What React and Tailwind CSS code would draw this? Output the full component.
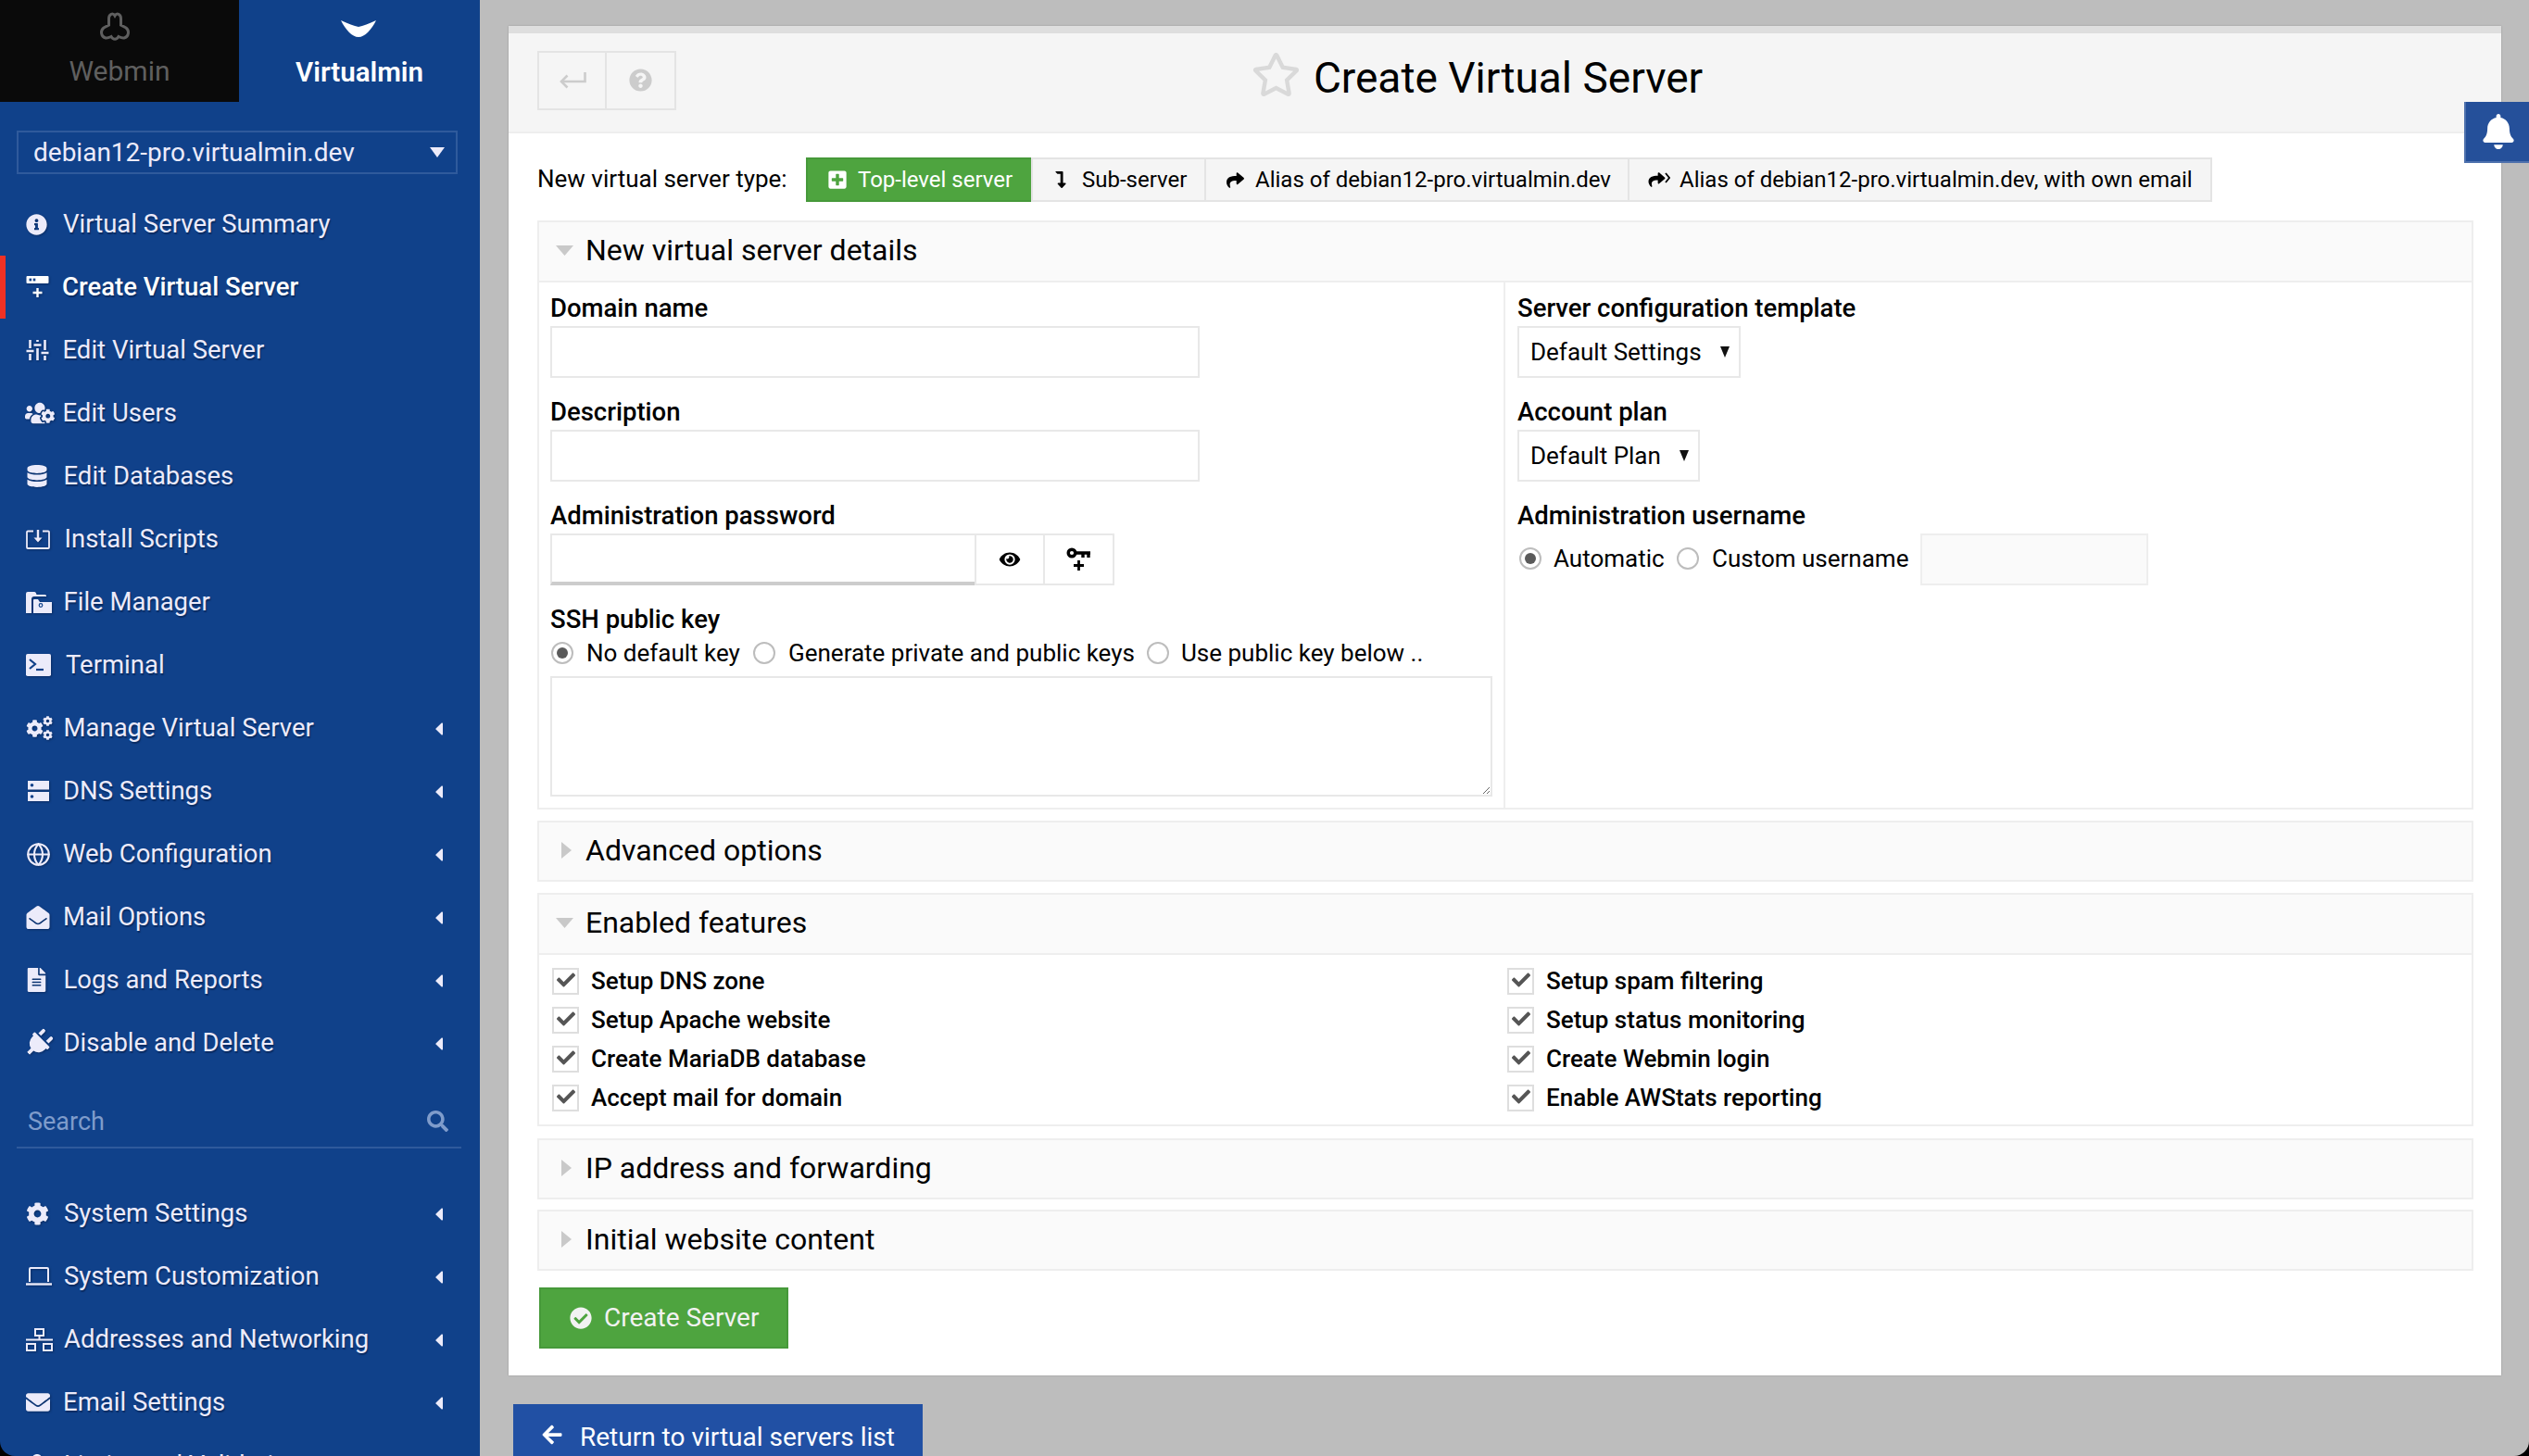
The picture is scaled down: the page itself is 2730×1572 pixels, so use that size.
import React from 'react';
import { FaInfoCircle, FaUsersCog, FaDatabase, FaCog, FaEnvelopeOpen, FaFileAlt, FaPlug, FaEnvelope, FaPlusSquare, FaShare, FaLevelDownAlt, FaQuestionCircle, FaRegStar, FaBell, FaEye, FaCheck, FaCheckCircle, FaArrowLeft, FaSearch, FaUser } from 'react-icons/fa';
import { Globe } from 'lucide-react';

const CreateIco = () => (
  <svg viewBox="0 0 24 24" className="w-[25px] h-[24px]" fill="currentColor">
    <path d="M1 0h22a1 1 0 0 1 1 1v6a1 1 0 0 1-1 1H1a1 1 0 0 1-1-1V1a1 1 0 0 1 1-1z" />
    <rect x="3" y="2.6" width="2.6" height="2.8" fill="#10418a" />
    <rect x="7.2" y="2.6" width="2.6" height="2.8" fill="#10418a" />
    <path d="M12 13v10M7 18h10" stroke="currentColor" strokeWidth="2.4" fill="none" />
  </svg>
);
const SlidersIco = () => (
  <svg viewBox="0 0 24 22" className="w-[25px] h-[22px]" stroke="currentColor" strokeWidth="2.6" fill="none">
    <path d="M4 0v9M0 12h8M4 15v7M12 0v2M8 5.500h8M12 9v13M20 0v11M16 14h8M20 17v5" />
  </svg>
);
const InstallIco = () => (
  <svg viewBox="0 0 26 21" className="w-[26px] h-[21px]" stroke="currentColor" strokeWidth="1.800" fill="none">
    <path d="M8 1.500H2a1 1 0 0 0-1 1V19a1 1 0 0 0 1 1h22a1 1 0 0 0 1-1V2.500a1 1 0 0 0-1-1h-6" />
    <path d="M13 0v10" strokeWidth="2.400" />
    <path d="M8.500 8.500h9L13 13.500z" fill="currentColor" stroke="none" />
  </svg>
);
const FilesIco = () => (
  <svg viewBox="0 0 28 23" className="w-[28px] h-[23px]" fill="currentColor">
    <path d="M0 23V2a2 2 0 0 1 2-2h7a2 2 0 0 1 2 1.500l.500 1.500H20a2 2 0 0 1 2 1v1H9a3 3 0 0 0-3 3v15z" />
    <path d="M8 23V9a1 1 0 0 1 1-1h4l2 3h13v12z" />
    <circle cx="16" cy="14.500" r="1.800" fill="none" stroke="#10418a" strokeWidth="1.200" />
  </svg>
);
const TerminalIco = () => (
  <svg viewBox="0 0 27 24" className="w-[27px] h-[24px]">
    <rect width="27" height="24" rx="1.800" fill="currentColor" />
    <path d="M4 6l6 5-6 5" stroke="#10418a" strokeWidth="2.200" fill="none" />
    <path d="M11 17h8" stroke="#10418a" strokeWidth="2.200" />
  </svg>
);
const CogsIco = () => (
  <span className="relative block w-[29px] h-[26px]">
    <FaCog className="absolute left-0 top-[4px] w-[19px] h-[19px]" />
    <FaCog className="absolute right-0 top-0 w-[11px] h-[11px]" />
    <FaCog className="absolute right-0 bottom-0 w-[11px] h-[11px]" />
  </span>
);
const DnsIco = () => (
  <svg viewBox="0 0 23 22" className="w-[23px] h-[22px]">
    <rect width="23" height="9.500" fill="currentColor" />
    <rect y="12" width="23" height="10" fill="currentColor" />
    <circle cx="4.500" cy="4.750" r="1.800" fill="#10418a" />
    <circle cx="4.500" cy="17" r="1.800" fill="#10418a" />
  </svg>
);
const LaptopIco = () => (
  <svg viewBox="0 0 28 20" className="w-[28px] h-[20px]" fill="none" stroke="currentColor" strokeWidth="2">
    <path d="M4 16V2a1 1 0 0 1 1-1h18a1 1 0 0 1 1 1v14" />
    <path d="M0 18.500h28" strokeWidth="2.400" />
  </svg>
);
const NetIco = () => (
  <svg viewBox="0 0 29 25" className="w-[29px] h-[25px]" fill="none" stroke="currentColor" strokeWidth="2">
    <rect x="10" y="1" width="9" height="7" />
    <rect x="1" y="17" width="9" height="7" />
    <rect x="19" y="17" width="9" height="7" />
    <path d="M14.500 8v4.500M0 12.500h29" />
  </svg>
);
const BackIco = () => (
  <svg viewBox="0 0 30 18" className="w-[30px] h-[18px]" fill="none" stroke="currentColor" strokeWidth="2.600">
    <path d="M28.500 0v10H3" />
    <path d="M9.500 3.500L3 10l6.500 6.500" />
  </svg>
);

const Tri = () => (
  <svg viewBox="0 0 9 14" className="w-[9px] h-[14px] absolute right-[39px] top-1/2 -translate-y-1/2 mt-[1px]" fill="currentColor">
    <path d="M8 1.200V12.800a.8.8 0 0 1-1.300.6L.8 7.800a1 1 0 0 1 0-1.600L6.700.600A.8.8 0 0 1 8 1.200z" />
  </svg>
);

const Item = ({ icon, tw, label, sub, active }) => (
  <div className={`relative flex items-center h-[68px] text-[27.5px] text-[#ecebfa] [text-shadow:1px_2px_1px_#0a2c63] ${active ? 'font-medium text-white' : ''}`}>
    {active && <span className="absolute left-0 top-0 bottom-0 w-[6px] bg-[#ef3124]" />}
    <span className={`flex items-center shrink-0 pl-[28px] drop-shadow-[1px_1px_1px_#0a2c63] ${tw}`}>{icon}</span>
    <span className="whitespace-nowrap">{label}</span>
    {sub && <Tri />}
  </div>
);

const Sidebar = () => (
  <aside className="w-[518px] shrink-0 h-full bg-[#10418a] overflow-hidden font-['Roboto',sans-serif]">
    <div className="flex h-[110px]">
      <div className="w-[258px] bg-[#0a0a0a] flex flex-col items-center pt-[13px] text-[#5f5f5f]">
        <svg viewBox="0 0 34 32" className="w-[34px] h-[32px] -ml-[10px]" fill="none" stroke="#5f5f5f" strokeWidth="3">
          <path d="M10.500 14V7C10.500 2 15 .500 17 4C19 .500 23.500 2 23.500 7V14L29 17C33 20 32 27 27 28C25 28.500 23 27.500 21 26.500C19 30 15 30 13 26.500C11 27.500 9 28.500 7 28C2 27 1 20 5 17Z" />
        </svg>
        <span className="text-[30px] leading-[36px] mt-[14px] font-normal">Webmin</span>
      </div>
      <div className="flex-1 flex flex-col items-center pt-[22px] text-white">
        <svg viewBox="0 0 38 18" className="w-[38px] h-[18px] -ml-[3px]" fill="#fff">
          <path d="M0 0C8 3.500 14 6 19 7C24 6 30 3.500 38 0C33 10 26 18 19 18C12 18 5 10 0 0Z" />
        </svg>
        <span className="text-[29.5px] leading-[36px] mt-[20px] font-semibold">Virtualmin</span>
      </div>
    </div>
    <div className="mt-[31px] ml-[18px] w-[476px] h-[47px] border-2 border-[#2f5a9c] flex items-center justify-between pl-[16px] pr-[12px] text-[#ecebfa] text-[28px]">
      <span>debian12-pro.virtualmin.dev</span>
      <svg viewBox="0 0 16 11" className="w-[16px] h-[11px]" fill="currentColor"><path d="M0 0h16L8 11z" /></svg>
    </div>
    <div className="mt-[20px]">
      <Item tw="w-[68px]" icon={<FaInfoCircle className="w-[23px] h-[23px]" />} label="Virtual Server Summary" />
      <Item tw="w-[67px]" active icon={<CreateIco />} label="Create Virtual Server" />
      <Item tw="w-[67.5px]" icon={<SlidersIco />} label="Edit Virtual Server" />
      <Item tw="w-[67.5px]" icon={<FaUsersCog className="w-[32px] h-[26px] -ml-[1px]" />} label="Edit Users" />
      <Item tw="w-[68.5px]" icon={<FaDatabase className="w-[24px] h-[24px]" />} label="Edit Databases" />
      <Item tw="w-[69.5px]" icon={<InstallIco />} label="Install Scripts" />
      <Item tw="w-[68.5px]" icon={<FilesIco />} label="File Manager" />
      <Item tw="w-[71px]" icon={<TerminalIco />} label="Terminal" />
      <Item tw="w-[68.5px]" sub icon={<CogsIco />} label="Manage Virtual Server" />
      <Item tw="w-[68px]" sub icon={<span className="pl-[2px]"><DnsIco /></span>} label="DNS Settings" />
      <Item tw="w-[68px]" sub icon={<Globe className="w-[27px] h-[27px]" strokeWidth={1.9} />} label="Web Configuration" />
      <Item tw="w-[68px]" sub icon={<FaEnvelopeOpen className="w-[26px] h-[25px]" />} label="Mail Options" />
      <Item tw="w-[68.5px]" sub icon={<FaFileAlt className="w-[23px] h-[26px]" />} label="Logs and Reports" />
      <Item tw="w-[68.5px]" sub icon={<FaPlug className="w-[31px] h-[31px] rotate-45 -ml-[2px]" />} label="Disable and Delete" />
    </div>
    <div className="mt-[24px] ml-[18px] w-[480px] h-[56px] border-b-2 border-[#2f5a9c] flex items-center justify-between pl-[12px] pr-[14px] text-[#7f9ccb] text-[27px]">
      <span>Search</span>
      <FaSearch className="w-[23px] h-[23px] -mt-[2px]" />
    </div>
    <div className="mt-[36px]">
      <Item tw="w-[69px]" sub icon={<FaCog className="w-[25px] h-[25px]" />} label="System Settings" />
      <Item tw="w-[69px]" sub icon={<LaptopIco />} label="System Customization" />
      <Item tw="w-[69px]" sub icon={<NetIco />} label="Addresses and Networking" />
      <Item tw="w-[68px]" sub icon={<FaEnvelope className="w-[26px] h-[26px]" />} label="Email Settings" />
      <Item tw="w-[69px]" sub icon={<FaUser className="w-[24px] h-[24px]" />} label="Limits and Validation" />
    </div>
  </aside>
);

const Down = () => <svg viewBox="0 0 19 11" className="w-[19px] h-[11px] absolute left-[18px] top-[25px]" fill="#c9c9c9"><path d="M0 0h19L9.500 11z" /></svg>;
const Right = () => <svg viewBox="0 0 11 18" className="w-[11px] h-[18px] absolute left-[24px] top-[21px]" fill="#c9c9c9"><path d="M0 0l11 9L0 18z" /></svg>;

const SecHead = ({ title, open }) => (
  <div className={`relative bg-[#fafafa] flex items-center pl-[50px] text-[32px] text-black ${open ? 'border-b-2 border-[#eeeeee] h-[65px]' : 'h-[62px]'}`}>
    {open ? <Down /> : <Right />}
    <span className="-mt-[3px]">{title}</span>
  </div>
);
const Collapsed = ({ title, cls }) => (
  <section className={`border-2 border-[#eeeeee] h-[66px] ${cls}`}>
    <SecHead title={title} />
  </section>
);

const Field = ({ label, children, cls }) => (
  <div className={cls}>
    <div className="h-[34px] flex items-center text-[27.5px] font-medium text-black -translate-y-[2px]">{label}</div>
    {children}
  </div>
);
const Radio = ({ on }) => (
  <span className="w-[24px] h-[24px] rounded-full border-2 border-[#bdbdbd] bg-white flex items-center justify-center shrink-0">
    {on && <span className="w-[12px] h-[12px] rounded-full bg-[#5a5a5a]" />}
  </span>
);
const TextIn = ({ cls }) => <input type="text" className={`block h-[56px] border-2 border-[#e8e8e8] bg-white outline-none ${cls}`} />;
const Sel = ({ text, cls }) => (
  <div className={`h-[56px] border-2 border-[#e8e8e8] flex items-center justify-between pl-[12px] pr-[10px] text-[26px] text-black ${cls}`}>
    <span>{text}</span>
    <svg viewBox="0 0 10 12" className="w-[10px] h-[12px]" fill="#111"><path d="M0 0h10L5 12z" /></svg>
  </div>
);
const Check = ({ label }) => (
  <div className="h-[42px] flex items-center text-[26px] font-medium text-black">
    <span className="relative w-[29px] h-[29px] border-2 border-[#dedede] bg-white shrink-0">
      <FaCheck className="absolute left-[3px] top-[1px] w-[20px] h-[20px] text-[#555555]" />
    </span>
    <span className="ml-[13px]">{label}</span>
  </div>
);
const TypeTab = ({ w, children, on }) => (
  <div className={`h-[48px] flex items-center border-2 -ml-[2px] whitespace-nowrap ${on ? 'bg-[#4ea43f] border-[#46993a] text-white' : 'bg-[#f5f5f5] border-[#e4e4e4] text-black'} ${w}`}>
    {children}
  </div>
);

const Panel = () => (
  <div className="w-[2151px] h-[1457px] bg-white shadow-[0_0_2px_#999] font-['Roboto',sans-serif]">
    <header className="h-[116px] border-t-[8px] border-b-2 border-t-[#dedede] border-b-[#eeeeee] bg-[#f5f5f5] grid grid-cols-[1fr_auto_1fr] pl-[31px] pr-[31px]">
      <div className="flex items-start pt-[19px] justify-between">
        <div className="flex h-[64px] border-2 border-[#e4e4e4] text-[#cccccc]">
          <span className="w-[73px] flex items-center justify-center border-r-2 border-[#e4e4e4]"><BackIco /></span>
          <span className="w-[73px] flex items-center justify-center"><FaQuestionCircle className="w-[25px] h-[25px] -mt-[1px]" /></span>
        </div>
        <FaRegStar className="w-[53px] h-[51px] mr-[7px] text-[#d9d9d9]" />
      </div>
      <h1 className="text-[46px] font-normal text-black self-center ml-[7px] -mt-[9px] whitespace-nowrap">Create Virtual Server</h1>
      <div />
    </header>
    <div className="pl-[31px] pr-[30px] pt-[26px]">
      <div className="flex items-center h-[48px] text-[24px] text-black">
        <span className="w-[292px] -mt-[2px] text-[26px]">New virtual server type:</span>
        <TypeTab w="w-[245px] pl-[22px]" on><FaPlusSquare className="w-[20px] h-[22px]" /><span className="ml-[12px]">Top-level server</span></TypeTab>
        <TypeTab w="w-[189px] pl-[24px]"><FaLevelDownAlt className="w-[12px] h-[18px]" /><span className="ml-[17px]">Sub-server</span></TypeTab>
        <TypeTab w="w-[459px] pl-[20px]"><FaShare className="w-[23px] h-[19px]" /><span className="ml-[10px]">Alias of debian12-pro.virtualmin.dev</span></TypeTab>
        <TypeTab w="w-[631px] pl-[20px]">
          <span className="relative w-[24px] h-[18px]"><FaShare className="absolute left-0 top-0 w-[19px] h-[18px]" /><svg viewBox="0 0 6 12" className="absolute right-0 top-[1px] w-[6px] h-[12px]" fill="none" stroke="currentColor" strokeWidth="1.800"><path d="M1 1l4 5-4 5" /></svg></span>
          <span className="ml-[10px]">Alias of debian12-pro.virtualmin.dev, with own email</span>
        </TypeTab>
      </div>

      <section className="mt-[20px] border-2 border-[#eeeeee] h-[636px] flex flex-col">
        <SecHead title="New virtual server details" open />
        <div className="flex flex-1">
          <div className="w-[1041px] shrink-0 pl-[12px] pt-[13px]">
            <Field label="Domain name"><TextIn cls="w-[701px]" /></Field>
            <Field label="Description" cls="mt-[22px]"><TextIn cls="w-[701px]" /></Field>
            <Field label="Administration password" cls="mt-[22px]">
              <div className="flex h-[56px]">
                <input type="text" className="block w-[460px] h-[56px] border-2 border-[#e8e8e8] border-b-[4px] border-b-[#cccccc] outline-none" />
                <span className="w-[76px] -ml-[2px] border-2 border-[#e8e8e8] flex items-center justify-center"><FaEye className="w-[24px] h-[20px] text-black" /></span>
                <span className="w-[77px] -ml-[2px] border-2 border-[#e8e8e8] flex items-center justify-center">
                  <svg viewBox="0 0 27 26" className="w-[27px] h-[26px]" fill="none" stroke="#000" strokeWidth="3.4"><circle cx="6" cy="6" r="3.800" /><path d="M10 6h16M18 6v5M24 6v5" /><path d="M13.500 14v11M8 19.500h11" strokeWidth="2.800" /></svg>
                </span>
              </div>
            </Field>
            <Field label="SSH public key" cls="mt-[22px]">
              <div className="h-[34px] flex items-center text-[26px] text-black pl-[1px]">
                <Radio on /><span className="ml-[14px] w-[180px]">No default key</span>
                <Radio /><span className="ml-[14px] w-[387px]">Generate private and public keys</span>
                <Radio /><span className="ml-[13px]">Use public key below ..</span>
              </div>
              <textarea className="block mt-[8px] w-[1017px] h-[130px] border-2 border-[#e8e8e8] outline-none" />
            </Field>
          </div>
          <div className="flex-1 border-l-2 border-[#eeeeee] pl-[13px] pt-[13px]">
            <Field label="Server configuration template"><Sel text="Default Settings" cls="w-[241px]" /></Field>
            <Field label="Account plan" cls="mt-[22px]"><Sel text="Default Plan" cls="w-[197px]" /></Field>
            <Field label="Administration username" cls="mt-[22px]">
              <div className="flex items-center h-[56px] text-[26px] text-black pl-[2px]">
                <div className="flex items-center -mt-[2px]">
                  <Radio on /><span className="ml-[13px] w-[133px]">Automatic</span>
                  <Radio /><span className="ml-[14px] w-[225px]">Custom username</span>
                </div>
                <span className="w-[246px] h-[56px] border-2 border-[#eeeeee] bg-[#fafafa]" />
              </div>
            </Field>
          </div>
        </div>
      </section>

      <Collapsed title="Advanced options" cls="mt-[12px]" />

      <section className="mt-[12px] border-2 border-[#eeeeee] h-[252px]">
        <SecHead title="Enabled features" open />
        <div className="flex pt-[7px] pl-[14px]">
          <div className="w-[1031px]">
            {['Setup DNS zone', 'Setup Apache website', 'Create MariaDB database', 'Accept mail for domain'].map(t => <Check key={t} label={t} />)}
          </div>
          <div>
            {['Setup spam filtering', 'Setup status monitoring', 'Create Webmin login', 'Enable AWStats reporting'].map(t => <Check key={t} label={t} />)}
          </div>
        </div>
      </section>

      <Collapsed title="IP address and forwarding" cls="mt-[13px]" />
      <Collapsed title="Initial website content" cls="mt-[11px]" />

      <button className="mt-[18px] ml-[2px] w-[269px] h-[66px] bg-[#4ea43f] border-2 border-[#46993a] text-[#f2f2f2] text-[28px] flex items-center pl-[31px]">
        <FaCheckCircle className="w-[24px] h-[24px]" />
        <span className="ml-[13px]">Create Server</span>
      </button>
    </div>
  </div>
);

export default function App() {
  return (
    <div className="relative flex w-[2730px] h-[1572px] bg-black">
      <div className="flex w-full h-full rounded-b-[16px] overflow-hidden">
        <Sidebar />
        <main className="flex-1 bg-[#bdbdbd] pl-[31px] pt-[28px] overflow-hidden">
          <Panel />
          <div className="mt-[31px] ml-[5px] w-[442px] h-[90px] bg-[#2150a4] text-white text-[28px] flex items-start pt-[15px] pl-[30px] font-['Roboto',sans-serif]">
            <FaArrowLeft className="w-[24px] h-[24px] mt-[6px]" />
            <span className="ml-[18px]">Return to virtual servers list</span>
          </div>
        </main>
      </div>
      <div className="absolute right-0 top-[110px] w-[70px] h-[66px] bg-[#25509a] border-l-2 border-b-2 border-[#ffffff30] flex items-center justify-center">
        <FaBell className="w-[36px] h-[38px] text-white ml-[2px]" />
      </div>
    </div>
  );
}
